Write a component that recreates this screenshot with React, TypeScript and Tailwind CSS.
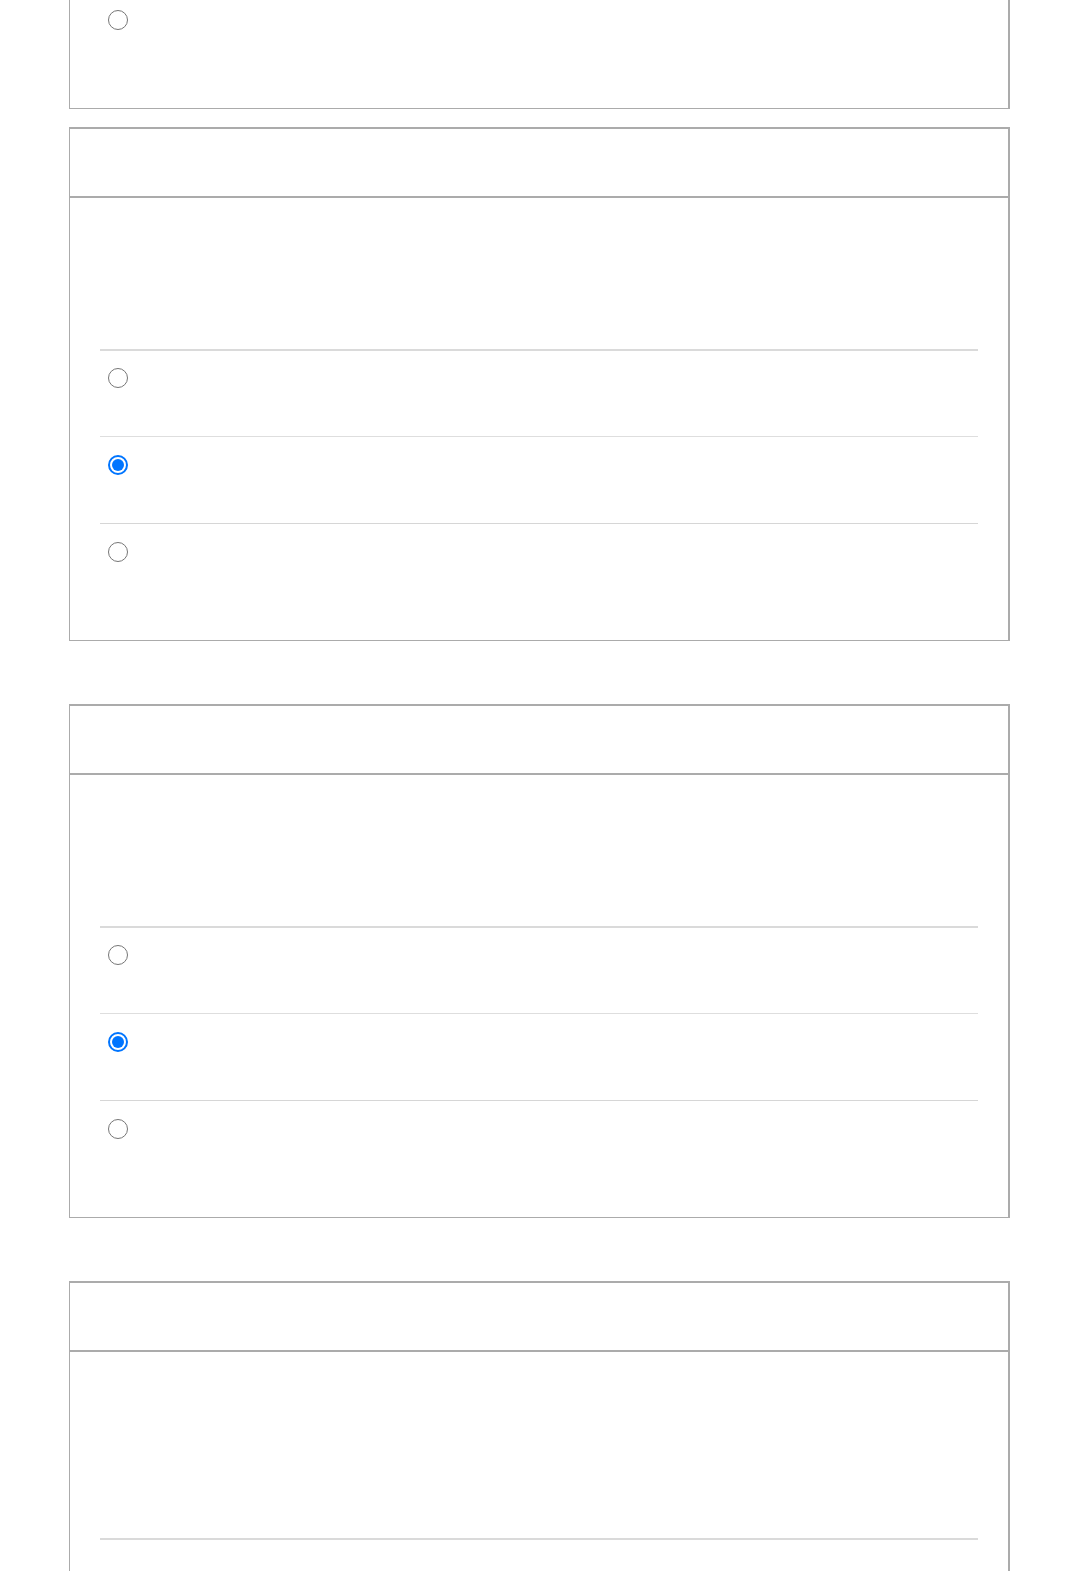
import React from "react";

function Radio({ checked }: { checked?: boolean }) {
  if (checked) {
    return (
      <span className="flex h-[20px] w-[20px] items-center justify-center rounded-full border-2 border-[#0075ff] bg-white">
        <span className="block h-[12px] w-[12px] rounded-full bg-[#0075ff]" />
      </span>
    );
  }
  return (
    <span className="block h-[20px] w-[20px] rounded-full border-[1.5px] border-[#767676] bg-white" />
  );
}

function Row({ checked, last, idx, hidden }: { checked?: boolean; last?: boolean; idx: number; hidden?: boolean }) {
  const cls = last
    ? "h-[116px] pl-[7.5px] pt-[18px]"
    : idx === 0
    ? "h-[86px] border-b border-[#dedede] pl-[7.5px] pt-[17px]"
    : "h-[87px] border-b border-[#d6d6d6] pl-[7.5px] pt-[18px]";
  return <div className={cls}>{hidden ? null : <Radio checked={checked} />}</div>;
}

function Panel({ tall, rows, hideRadios }: { tall?: boolean; rows: boolean[]; hideRadios?: boolean }) {
  return (
    <div className="w-[941px] border-l border-b border-t-2 border-r-2 border-[#ababab] bg-white">
      <div className="h-[69px] border-b-2 border-[#ababab]" />
      <div className="px-[30px]">
        <div
          className={
            tall
              ? "h-[188px] border-b-2 border-[#dadada]"
              : "h-[153px] border-b-2 border-[#dadada]"
          }
        />
        {rows.map((c, i) => (
          <Row key={i} idx={i} checked={c} last={i === rows.length - 1} hidden={hideRadios} />
        ))}
      </div>
    </div>
  );
}

export default function App() {
  return (
    <div className="h-[1571px] overflow-hidden bg-white pl-[69px] font-['Liberation_Sans',sans-serif]">
      <div className="h-[109px] w-[941px] border-l border-b border-r-2 border-[#ababab] pl-[37.5px] pt-[10px]">
        <Radio />
      </div>
      <div className="mt-[18px]">
        <Panel rows={[false, true, false]} />
      </div>
      <div className="mt-[63px]">
        <Panel rows={[false, true, false]} />
      </div>
      <div className="mt-[63px]">
        <Panel tall rows={[false, false, false]} hideRadios />
      </div>
    </div>
  );
}
